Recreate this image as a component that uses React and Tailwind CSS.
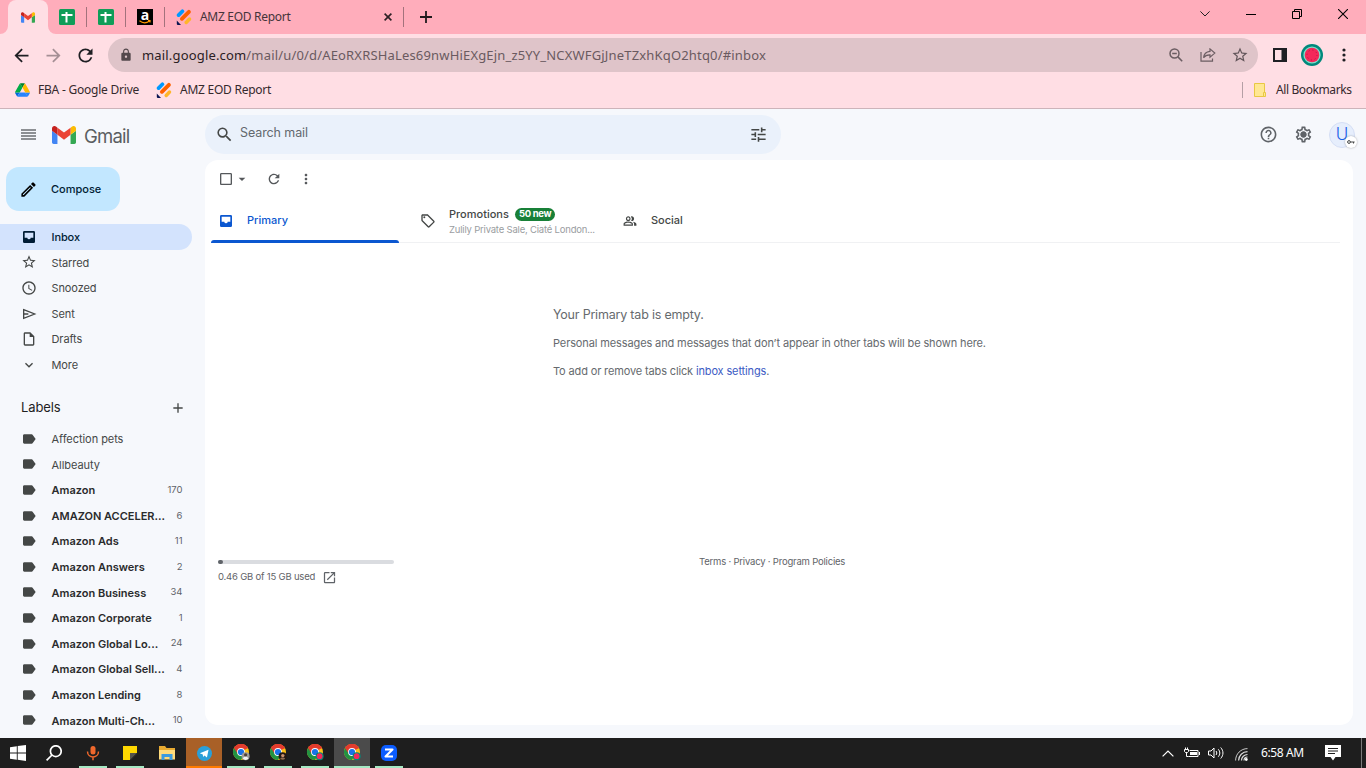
import React from "react";
import clsx from "clsx";
import {
  MdStarBorder,
  MdAccessTime,
  MdOutlineInsertDriveFile,
  MdExpandMore,
  MdAdd,
  MdLabel,
  MdSearch,
  MdTune,
  MdHelpOutline,
  MdOutlineSettings,
  MdRefresh,
  MdMoreVert,
  MdCheckBoxOutlineBlank,
  MdArrowDropDown,
  MdOutlineLocalOffer,
  MdOutlinePeopleAlt,
  MdOpenInNew,
  MdArrowBack,
  MdArrowForward,
  MdLock,
  MdOutlineEdit,
} from "react-icons/md";

function InboxIcon({ className }) {
  return (
    <svg viewBox="0 0 24 24" className={className}>
      <path
        d="M5 3h14a2 2 0 0 1 2 2v14a2 2 0 0 1-2 2H5a2 2 0 0 1-2-2V5a2 2 0 0 1 2-2zM5.5 5.5v7.5h4a2.5 2.5 0 0 0 5 0h4V5.5z"
        fill="currentColor"
        fillRule="evenodd"
      />
    </svg>
  );
}

function SendIcon({ className }) {
  return (
    <svg viewBox="0 0 24 24" className={className} fill="none" stroke="currentColor" strokeWidth="2">
      <path d="M4 5.5L20.5 12 4 18.5zM4 12h7" />
    </svg>
  );
}

const navItems = [
  { label: "Inbox", icon: InboxIcon, active: true },
  { label: "Starred", icon: MdStarBorder },
  { label: "Snoozed", icon: MdAccessTime },
  { label: "Sent", icon: SendIcon },
  { label: "Drafts", icon: MdOutlineInsertDriveFile },
  { label: "More", icon: MdExpandMore },
];

const labels = [
  { name: "Affection pets" },
  { name: "Allbeauty" },
  { name: "Amazon", count: 170 },
  { name: "AMAZON ACCELER...", count: 6 },
  { name: "Amazon Ads", count: 11 },
  { name: "Amazon Answers", count: 2 },
  { name: "Amazon Business", count: 34 },
  { name: "Amazon Corporate", count: 1 },
  { name: "Amazon Global Lo...", count: 24 },
  { name: "Amazon Global Sell...", count: 4 },
  { name: "Amazon Lending", count: 8 },
  { name: "Amazon Multi-Ch...", count: 10 },
];

function GmailLogo({ className }) {
  return (
    <svg viewBox="52 42 88 66" className={className}>
      <path fill="#4285f4" d="M58 108h14V74L52 59v43c0 3.32 2.69 6 6 6" />
      <path fill="#34a853" d="M120 108h14c3.32 0 6-2.69 6-6V59l-20 15" />
      <path fill="#fbbc04" d="M120 48v26l20-15v-8c0-7.42-8.47-11.65-14.4-7.2" />
      <path fill="#ea4335" d="M72 74V48l24 18 24-18v26L96 92" />
      <path fill="#c5221f" d="M52 51v8l20 15V48l-5.6-4.2c-5.94-4.45-14.4-.22-14.4 7.2" />
    </svg>
  );
}

function SheetsIcon() {
  return (
    <svg viewBox="0 0 16 16" className="h-4 w-4">
      <rect width="16" height="16" rx="1.5" fill="#0f9d58" />
      <path d="M2.5 6h11M7.5 3v10.5" stroke="#fff" strokeWidth="2" />
    </svg>
  );
}

function JotformIcon({ className }) {
  return (
    <svg viewBox="0 0 16 16" className={className}>
      <g strokeLinecap="round" fill="none">
        <path d="M2.6 6.1l3.8-3.8" stroke="#0099ff" strokeWidth="3.7" />
        <path d="M5.9 9.8l7-7" stroke="#ff6100" strokeWidth="3.9" />
        <path d="M10.2 13.4l3.3-3.3" stroke="#ffb629" strokeWidth="3.5" />
      </g>
      <path d="M.8 11.6v3.5c0 .5.3.8.8.8H5z" fill="#0a1551" />
    </svg>
  );
}

function DriveIcon() {
  return (
    <svg viewBox="0 0 87.3 78" className="h-[14px] w-[15px]">
      <path d="m6.6 66.85 3.85 6.65c.8 1.4 1.95 2.5 3.3 3.3l13.75-23.8h-27.5c0 1.55.4 3.1 1.2 4.5z" fill="#0066da" />
      <path d="m43.65 25-13.75-23.8c-1.35.8-2.5 1.9-3.3 3.3l-25.4 44a9.06 9.06 0 0 0 -1.2 4.5h27.5z" fill="#00ac47" />
      <path d="m73.55 76.8c1.35-.8 2.5-1.9 3.3-3.3l1.6-2.75 7.65-13.25c.8-1.4 1.2-2.95 1.2-4.5h-27.5l5.85 11.5z" fill="#2684fc" />
      <path d="m43.65 25 13.75-23.8c-1.35-.8-2.9-1.2-4.5-1.2h-18.5c-1.6 0-3.15.45-4.5 1.2z" fill="#00832d" />
      <path d="m59.8 53h-32.3l-13.75 23.8c1.35.8 2.9 1.2 4.5 1.2h50.8c1.6 0 3.15-.45 4.5-1.2z" fill="#2684fc" />
      <path d="m73.4 26.5-12.7-22c-.8-1.4-1.95-2.5-3.3-3.3l-13.75 23.8 16.15 28h27.45c0-1.55-.4-3.1-1.2-4.5z" fill="#ffba00" />
    </svg>
  );
}

function Watermelon({ className }) {
  return (
    <svg viewBox="0 0 22 22" className={className}>
      <circle cx="11" cy="11" r="11" fill="#00897b" />
      <circle cx="11" cy="11" r="8.6" fill="#80deca" />
      <circle cx="11" cy="11" r="7.3" fill="#f4285a" />
      <circle cx="11" cy="11" r="5" fill="none" stroke="#b5123f" strokeWidth="1" strokeDasharray="1 2.9" />
    </svg>
  );
}

function ChromeIcon({ badge }) {
  return (
    <svg viewBox="0 0 18 18" className="ml-[2px] h-[18px] w-[18px] shrink-0 overflow-visible">
      <circle cx="8" cy="8" r="8" fill="#fbc116" />
      <path d="M8 8L1.07 4A8 8 0 0 1 14.93 4z" fill="#e33b2e" />
      <path d="M1.07 4A8 8 0 0 0 8 16l3.4-6L8 8z" fill="#229342" />
      <path d="M1.07 4L4.8 10 8 8V4.2h7A8 8 0 0 0 1.07 4z" fill="#e33b2e" />
      <circle cx="8" cy="8" r="3.9" fill="#fff" />
      <circle cx="8" cy="8" r="3.1" fill="#1a73e8" />
      {badge === "melon" && (
        <>
          <circle cx="12.6" cy="12.2" r="4" fill="#00897b" />
          <circle cx="12.6" cy="12.2" r="2.9" fill="#f4285a" />
        </>
      )}
      {badge === "grey" && (
        <>
          <circle cx="12.6" cy="12.2" r="4" fill="#9b9b9b" />
          <circle cx="12.6" cy="10.8" r="1.6" fill="#504038" />
          <path d="M9.8 14.6c.6-2.6 5-2.6 5.6 0a4 4 0 0 1-5.6 0z" fill="#f3f3f3" />
        </>
      )}
      {badge === "dark" && (
        <>
          <circle cx="12.6" cy="12.2" r="4" fill="#241812" />
          <circle cx="12.8" cy="11.6" r="1.7" fill="#c89270" />
          <path d="M10.2 14.8c.6-1.6 4.2-1.6 5 0a4 4 0 0 1-5 0z" fill="#8d6b4f" />
        </>
      )}
    </svg>
  );
}

function TabDivider() {
  return <div className="h-5 w-px bg-[#a3727c]" />;
}

function TabStrip() {
  return (
    <div className="flex h-[34px] bg-[#ffadbb]">
      <div className="relative ml-2 flex w-10 items-center justify-center rounded-t-lg bg-[#ffdee4]">
        <GmailLogo className="h-[11px] w-[14px]" />
        <svg viewBox="0 0 8 8" className="absolute -left-2 bottom-0 h-2 w-2">
          <path d="M8 0v8H0a8 8 0 0 0 8-8z" fill="#ffdee4" />
        </svg>
        <svg viewBox="0 0 8 8" className="absolute -right-2 bottom-0 h-2 w-2">
          <path d="M0 0v8h8a8 8 0 0 1-8-8z" fill="#ffdee4" />
        </svg>
      </div>
      <div className="flex flex-1 items-center">
        <div className="flex w-[38px] justify-center pl-[11px] pr-[11px]"><SheetsIcon /></div>
        <TabDivider />
        <div className="flex w-[38px] justify-center"><SheetsIcon /></div>
        <TabDivider />
        <div className="flex w-[38px] justify-center">
          <div className="relative flex h-4 w-4 justify-center bg-black">
            <span className="font-['Open_Sans',sans-serif] text-[14px] font-bold leading-[11px] text-white">a</span>
            <svg viewBox="0 0 12 4" className="absolute bottom-[1px] left-[2px] h-1 w-3" fill="none" stroke="#ff9900" strokeWidth="1.2">
              <path d="M.5.8c3 2.4 7 2.4 10 .2M9 .6h2v1.8" />
            </svg>
          </div>
        </div>
        <TabDivider />
        <div className="flex w-[238px] items-center pl-[11px] pr-[11px]">
          <JotformIcon className="h-4 w-4" />
          <span className="ml-2 flex-1 text-[12px] tracking-[-0.3px] text-[#45343a]">AMZ EOD Report</span>
          <svg viewBox="0 0 8 8" className="h-2 w-2">
            <path d="M.6.6l6.8 6.8M7.4.6L.6 7.4" stroke="#2c2024" strokeWidth="1.6" />
          </svg>
        </div>
        <TabDivider />
        <svg viewBox="0 0 12 12" className="ml-4 h-3 w-3">
          <path d="M6 0v12M0 6h12" stroke="#1f1a1c" strokeWidth="1.8" />
        </svg>
      </div>
      <div className="flex h-7">
        <div className="flex w-[46px] items-center justify-center">
          <svg viewBox="0 0 10 6" className="h-[6px] w-[10px]"><path d="M.4.4L5 5 9.6.4" fill="none" stroke="#222" /></svg>
        </div>
        <div className="flex w-[46px] items-center justify-center"><div className="h-px w-[10px] bg-black" /></div>
        <div className="flex w-[46px] items-center justify-center">
          <svg viewBox="0 0 10 10" className="h-[10px] w-[10px]" fill="none" stroke="#000">
            <path d="M.5 2.5h7v7h-7zM2.5 2.5v-2h7v7h-2" />
          </svg>
        </div>
        <div className="flex w-[46px] items-center justify-center">
          <svg viewBox="0 0 10 10" className="h-[10px] w-[10px]"><path d="M0 0l10 10M10 0L0 10" stroke="#000" strokeWidth="1.1" /></svg>
        </div>
      </div>
    </div>
  );
}

function AddressBar() {
  return (
    <div className="flex h-[42px] items-center bg-[#ffdee4] pl-[5px] pr-[6px]">
      <div className="flex w-8 justify-center"><MdArrowBack className="h-[21px] w-[21px] text-[#1f1f23]" /></div>
      <div className="flex w-8 justify-center"><MdArrowForward className="h-[21px] w-[21px] text-[#a58f95]" /></div>
      <div className="flex w-8 justify-center"><MdRefresh className="h-[21px] w-[21px] text-[#1f1f23]" /></div>
      <div className="ml-[7px] flex h-[34px] flex-1 items-center rounded-full bg-[#dfc4c9] pl-[11px] pr-[2px]">
        <MdLock className="h-[14px] w-[14px] text-[#54484c]" />
        <span className="ml-[9px] flex-1 whitespace-nowrap pt-px text-[13px] tracking-[0.17px] text-[#6a5a60]">
          <span className="text-[#2a2024]">mail.google.com</span>/mail/u/0/d/AEoRXRSHaLes69nwHiEXgEjn_z5YY_NCXWFGjJneTZxhKqO2htq0/#inbox
        </span>
        <div className="flex w-8 justify-center">
          <svg viewBox="0 0 14 14" className="h-[14px] w-[14px]" fill="none" stroke="#6b5d62" strokeWidth="1.5">
            <circle cx="5.5" cy="5.5" r="4.5" />
            <path d="M3.2 5.5h4.6M8.9 8.9l4.3 4.3" />
          </svg>
        </div>
        <div className="flex w-8 justify-center">
          <svg viewBox="0 0 16 14" className="h-[14px] w-4" fill="none" stroke="#6b5d62" strokeWidth="1.2">
            <path d="M1 4v9.2h11.5V10.5" />
            <path d="M10 .9l4.8 4.2L10 9.2V6.8C7 6.7 5 7.6 3.6 9.7 3.9 6.2 6.4 3.8 10 3.4z" />
          </svg>
        </div>
        <div className="flex w-8 justify-center"><MdStarBorder className="h-[18px] w-[18px] text-[#62555a]" /></div>
      </div>
      <div className="ml-[6px] flex w-8 justify-center">
        <svg viewBox="0 0 14 14" className="h-[14px] w-[14px]">
          <path d="M0 0h14v14H0zM2 2v10h6.5V2z" fill="#1f1f23" fillRule="evenodd" />
        </svg>
      </div>
      <div className="flex w-8 justify-center"><Watermelon className="h-[22px] w-[22px]" /></div>
      <div className="flex w-8 justify-center">
        <svg viewBox="0 0 4 14" className="h-[14px] w-1" fill="#1f1f23">
          <circle cx="2" cy="2" r="1.6" />
          <circle cx="2" cy="7" r="1.6" />
          <circle cx="2" cy="12" r="1.6" />
        </svg>
      </div>
    </div>
  );
}

function BookmarksBar() {
  return (
    <div className="flex h-[33px] items-center border-b border-[#cdb4ba] bg-[#ffdee4] pb-[4px] pl-[15px] pr-[14px] text-[12px] text-[#35292d]">
      <DriveIcon />
      <span className="ml-2 w-[118px] whitespace-nowrap tracking-[-0.22px]">FBA - Google Drive</span>
      <JotformIcon className="h-4 w-4" />
      <span className="ml-2 flex-1 tracking-[-0.25px]">AMZ EOD Report</span>
      <div className="mr-[11px] h-4 w-px bg-[#b59fa5]" />
      <svg viewBox="0 0 12 14" className="h-[14px] w-3">
        <path d="M.5.5h10v13h-10z" fill="#ffe793" stroke="#e8c843" />
        <path d="M9.5 9.5h2v4h-2z" fill="#ffe793" stroke="#e8c843" />
      </svg>
      <span className="ml-[10px] w-[76px] whitespace-nowrap tracking-[-0.4px]">All Bookmarks</span>
    </div>
  );
}

function GmailHeader() {
  return (
    <header className="flex h-[51px] items-center">
      <div className="flex w-[205px] items-center pl-[21px]">
        <svg viewBox="0 0 15 11" className="h-[11px] w-[15px]">
          <path d="M0 1h15M0 4h15M0 7h15M0 10h15" stroke="#6b6e72" strokeWidth="1.3" />
        </svg>
        <GmailLogo className="ml-4 h-[18px] w-6" />
        <span className="ml-2 pt-[2px] text-[18.5px] leading-5 tracking-[-0.8px] text-[#5a5d61]">Gmail</span>
      </div>
      <div className="flex h-[39px] w-[576px] items-center rounded-full bg-[#eaf1fb] pl-[10px] pr-[13px]">
        <MdSearch className="h-[19px] w-[19px] text-[#444746]" />
        <span className="ml-[6px] flex-1 pb-[2px] text-[12.5px] tracking-[-0.1px] text-[#63686e]">Search mail</span>
        <MdTune className="h-[19px] w-[19px] text-[#444746]" />
      </div>
      <div className="ml-auto flex items-center pr-[11px]">
        <MdHelpOutline className="h-[19px] w-[19px] text-[#5f6368]" />
        <svg viewBox="0 0 24 24" className="ml-4 h-[19px] w-[19px] text-[#5f6368]">
          <MdOutlineSettings size={24} />
          <circle cx="12" cy="12" r="3.5" fill="currentColor" />
        </svg>
        <div className="relative ml-4 flex h-[26px] w-[26px] items-center justify-center rounded-full border border-[#d5dff5] bg-[#e6eefc] text-[17px] font-light text-[#1a62e8]">
          U
          <div className="absolute -bottom-px -right-[3px] flex h-[12px] w-[12px] items-center justify-center rounded-full bg-white shadow-[0_0_2px_rgba(0,0,0,0.35)]">
            <svg viewBox="0 0 8 4" className="h-1 w-2" fill="none" stroke="#444746" strokeWidth="1">
              <circle cx="2" cy="2" r="1.4" />
              <path d="M3.4 2h4.2M6.5 2v1.5" />
            </svg>
          </div>
        </div>
      </div>
    </header>
  );
}

function Sidebar() {
  return (
    <aside className="flex w-[205px] flex-col overflow-hidden text-[11px] text-[#444746]">
      <button className="ml-[6px] mt-[7px] flex h-[44px] w-[114px] shrink-0 items-center rounded-[13px] bg-[#c2e7ff] pl-[13px] font-medium text-[#001d35]">
        <MdOutlineEdit className="h-[19px] w-[19px] text-black" />
        <span className="ml-[13px]">Compose</span>
      </button>
      <nav className="mt-[13px]">
        {navItems.map((item) => {
          const Icon = item.icon;
          return (
            <div
              key={item.label}
              className={clsx(
                "flex h-[25.6px] w-[192px] items-center rounded-r-full pl-[21px]",
                item.active && "bg-[#d3e3fd] font-medium text-[#001d35]"
              )}
            >
              <Icon className="h-4 w-4" />
              <span className="ml-[14.5px] pt-px tracking-[-0.1px]">{item.label}</span>
            </div>
          );
        })}
      </nav>
      <div className="mt-[17px] flex h-[25px] shrink-0 items-center pl-[21px] pr-[19px]">
        <span className="flex-1 pt-[2px] text-[13px] tracking-[-0.1px] text-[#1f1f1f]">Labels</span>
        <MdAdd className="mt-px h-4 w-4" />
      </div>
      <div className="mt-[6px]">
        {labels.map((item) => (
          <div key={item.name} className="flex h-[25.6px] items-center pl-[21px] pr-[22.5px] pt-px">
            <MdLabel className="h-4 w-4 text-[#444746]" />
            <span className={clsx("ml-[14.5px] flex-1 whitespace-nowrap pt-px", item.count ? "font-semibold text-[#2a2b2c]" : "tracking-[-0.05px]")}>
              {item.name}
            </span>
            <span className="text-[9.5px] text-[#5f6368]">{item.count}</span>
          </div>
        ))}
      </div>
    </aside>
  );
}

function MailPanel() {
  return (
    <main className="mr-[13px] flex h-[565px] flex-1 flex-col rounded-[13px] bg-white text-[#444746]">
      <div className="flex h-[38px] items-center pl-[13px] text-[#55585b]">
        <MdCheckBoxOutlineBlank className="h-4 w-4" />
        <MdArrowDropDown className="h-4 w-4" />
        <MdRefresh className="ml-4 h-4 w-4" />
        <MdMoreVert className="ml-4 h-4 w-4" />
      </div>
      <div className="ml-[6px] mr-[13px] flex h-[45px] border-b border-[#f0f1f3] text-[11px]">
        <div className="relative flex w-[202px] items-center pl-[7px] font-medium text-[#0b57d0]">
          <InboxIcon className="mt-px h-4 w-4" />
          <span className="ml-[13px] pt-px">Primary</span>
          <div className="absolute -bottom-px left-0 h-[3px] w-[188px] rounded-t-[3px] bg-[#0b57d0]" />
        </div>
        <div className="flex w-[202px] items-center pl-[7px]">
          <MdOutlineLocalOffer className="mt-px h-4 w-4" />
          <div className="ml-[13px] pt-[4px]">
            <div className="flex h-[15px] items-center">
              <span className="font-medium">Promotions</span>
              <span className="ml-[6px] flex h-[13px] items-center rounded-full bg-[#188038] px-1 text-[9.5px] font-bold tracking-[-0.3px] text-white">50 new</span>
            </div>
            <div className="whitespace-nowrap text-[9.5px] leading-4 tracking-[-0.2px] text-[#9a9da1]">Zulily Private Sale, Ciaté London...</div>
          </div>
        </div>
        <div className="flex w-[202px] items-center pl-2 font-medium">
          <MdOutlinePeopleAlt className="mt-px h-[14px] w-[14px]" />
          <span className="ml-[14px] pt-px">Social</span>
        </div>
      </div>
      <div className="ml-[348px] mt-[57px] flex flex-col text-[11px] text-[#666a6e]">
        <p className="h-[29px] text-[12.5px] leading-[29px] tracking-[-0.2px]">Your Primary tab is empty.</p>
        <p className="h-7 leading-7 tracking-[-0.12px]">Personal messages and messages that don’t appear in other tabs will be shown here.</p>
        <p className="h-7 leading-7 tracking-[-0.14px]">To add or remove tabs click <span className="text-[#3c5bc4]">inbox settings</span>.</p>
      </div>
      <footer className="mt-[169px] flex text-[9.5px] text-[#5f6368]">
        <div className="ml-[13px] w-[176px] pt-[6px]">
          <div className="h-1 rounded-full bg-[#dadce0]">
            <div className="h-1 w-[5px] rounded-full bg-[#5f6368]" />
          </div>
          <div className="mt-[6px] flex items-center">
            <span className="w-[104px] whitespace-nowrap pb-px tracking-[-0.2px]">0.46 GB of 15 GB used</span>
            <MdOpenInNew className="mb-px h-[15px] w-[15px]" />
          </div>
        </div>
        <div className="ml-[305px] whitespace-nowrap leading-4 tracking-[-0.2px]">Terms · Privacy · Program Policies</div>
      </footer>
    </main>
  );
}

function TaskCell({ className, bar, children }) {
  return (
    <div className={clsx("relative flex h-[30px] items-center justify-center", className || "w-[37px]")}>
      {children}
      {bar && <div className={clsx("absolute bottom-0 h-[2px]", bar)} />}
    </div>
  );
}

function Taskbar() {
  return (
    <div className="flex h-[30px] items-center bg-[#1e1e1e]">
      <svg viewBox="0 0 16 16" className="ml-[10px] h-4 w-4" fill="#fff">
        <path d="M0 2.2l6.8-1v6.3H0zM7.7 1.1L16 0v7.5H7.7zM0 8.4h6.8v6.4L0 13.8zM7.7 8.4H16V16l-8.3-1.2z" />
      </svg>
      <TaskCell className="ml-[9px] w-[37px]">
        <svg viewBox="0 0 16 16" className="h-4 w-4" fill="none" stroke="#fff" strokeWidth="1.7">
          <circle cx="9.8" cy="6.2" r="5.4" />
          <path d="M6 10L.6 15.4" />
        </svg>
      </TaskCell>
      <TaskCell className="ml-[2px] w-[37px]" bar="w-7 bg-[#a5e8c3]">
        <svg viewBox="0 0 14 16" className="h-4 w-[14px]" fill="none" stroke="#f0682c">
          <rect x="4.5" y="1" width="5" height="8.5" rx="2.5" fill="#f0682c" stroke="none" />
          <path d="M1.5 6.5c0 7.2 11 7.2 11 0M7 12v3.2" strokeWidth="1.5" />
        </svg>
      </TaskCell>
      <TaskCell bar="w-7 bg-[#a5e8c3]">
        <svg viewBox="0 0 14 14" className="h-[14px] w-[14px]">
          <path d="M0 0h14v7H7v7H0z" fill="#ffd800" />
          <path d="M7 7h7l-7 7z" fill="#55544b" />
          <path d="M14 7v1l-6 6H7z" fill="#2e2e2a" />
        </svg>
      </TaskCell>
      <TaskCell>
        <svg viewBox="0 0 16 14" className="h-[14px] w-4">
          <path d="M0 0h6l1.5 2H16v11H0z" fill="#e8ab32" />
          <path d="M0 4h16v9.5H0z" fill="#ffdb7c" />
          <path d="M2.5 14V8h11v6h-3v-3h-5v3z" fill="#3c9be0" />
        </svg>
      </TaskCell>
      <TaskCell className="ml-px w-9 bg-[#a96027]" bar="w-9 bg-[#ff7a00]">
        <svg viewBox="0 0 16 16" className="h-[15px] w-[15px]">
          <circle cx="8" cy="8" r="8" fill="#2a9fd8" />
          <path d="M3 7.8l9.3-3.7-1.7 8.1-2.7-2-1.4 1.4-.3-2.5z" fill="#fff" />
        </svg>
      </TaskCell>
      <TaskCell bar="w-7 bg-[#a5e8c3]"><ChromeIcon badge="grey" /></TaskCell>
      <TaskCell bar="w-7 bg-[#a5e8c3]"><ChromeIcon badge="dark" /></TaskCell>
      <TaskCell bar="w-7 bg-[#a5e8c3]"><ChromeIcon badge="melon" /></TaskCell>
      <TaskCell className="ml-px w-9 bg-[#4b4b4b]" bar="w-9 bg-[#a5e8c3]"><ChromeIcon badge="melon" /></TaskCell>
      <TaskCell bar="w-7 bg-[#a5e8c3]">
        <svg viewBox="0 0 16 16" className="h-4 w-4">
          <rect width="16" height="16" rx="5" fill="#0b5cff" />
          <path d="M4 4.5h7.5l-7 7H12" fill="none" stroke="#fff" strokeWidth="2.1" strokeLinejoin="round" />
        </svg>
      </TaskCell>
      <div className="ml-auto flex h-[30px] items-center pr-1">
        <svg viewBox="0 0 12 7" className="h-[7px] w-3"><path d="M.6 6.4L6 1l5.4 5.4" fill="none" stroke="#fff" strokeWidth="1.2" /></svg>
        <svg viewBox="0 0 16 12" className="ml-[10px] h-3 w-4" fill="none" stroke="#fff">
          <path d="M5.5 3.5h8.5v6H4.5M15.5 5v3" />
          <path d="M6 5h7v3H6z" fill="#fff" stroke="none" />
          <path d="M.5 2.5h4v2l-1 1h-2l-1-1zM1.5.5v2M3.5.5v2M2.5 5.5v4h2" />
        </svg>
        <svg viewBox="0 0 17 14" className="ml-2 h-[14px] w-[17px]" fill="none" stroke="#fff">
          <path d="M.5 5H3l3-3v10L3 9H.5z" />
          <path d="M8 5c1 1.3 1 2.7 0 4M10.3 3.3c2 2.3 2 5.1 0 7.4M12.7 1.5c3 3.4 3 7.6 0 11" />
        </svg>
        <svg viewBox="0 0 13 13" className="ml-[10px] mt-[2px] h-[13px] w-[13px]" fill="none" stroke="#ddd">
          <path d="M.6 12.5C.6 5.9 5.9.6 12.5.6" strokeWidth=".9" />
          <path d="M3.6 12.5c0-4.9 4-8.9 8.9-8.9M6.5 12.5c0-3.3 2.7-6 6-6M9 12.5c0-2 1.5-3.5 3.5-3.5" strokeWidth="1.2" />
          <circle cx="11.3" cy="11.5" r="1.4" fill="#fff" stroke="none" />
        </svg>
        <span className="ml-[13px] w-[44px] whitespace-nowrap text-[12px] tracking-[-0.4px] text-white">6:58 AM</span>
        <svg viewBox="0 0 16 16" className="ml-[20px] h-4 w-4">
          <path d="M0 0h16v12h-5.5L8 15.5 5.5 12H0z" fill="#fff" />
          <path d="M3 3.5h10M3 6h10M3 8.5h7" stroke="#1e1e1e" />
        </svg>
        <div className="ml-5 h-[30px] w-px bg-[#7a7a7a]" />
      </div>
    </div>
  );
}

export default function App() {
  return (
    <div className="flex h-screen w-screen flex-col overflow-hidden bg-[#f6f8fc] font-['Noto_Sans',sans-serif]">
      <TabStrip />
      <AddressBar />
      <BookmarksBar />
      <div className="flex min-h-0 flex-1 flex-col overflow-hidden font-['Inter',sans-serif]">
        <GmailHeader />
        <div className="flex min-h-0 flex-1">
          <Sidebar />
          <MailPanel />
        </div>
      </div>
      <Taskbar />
    </div>
  );
}
